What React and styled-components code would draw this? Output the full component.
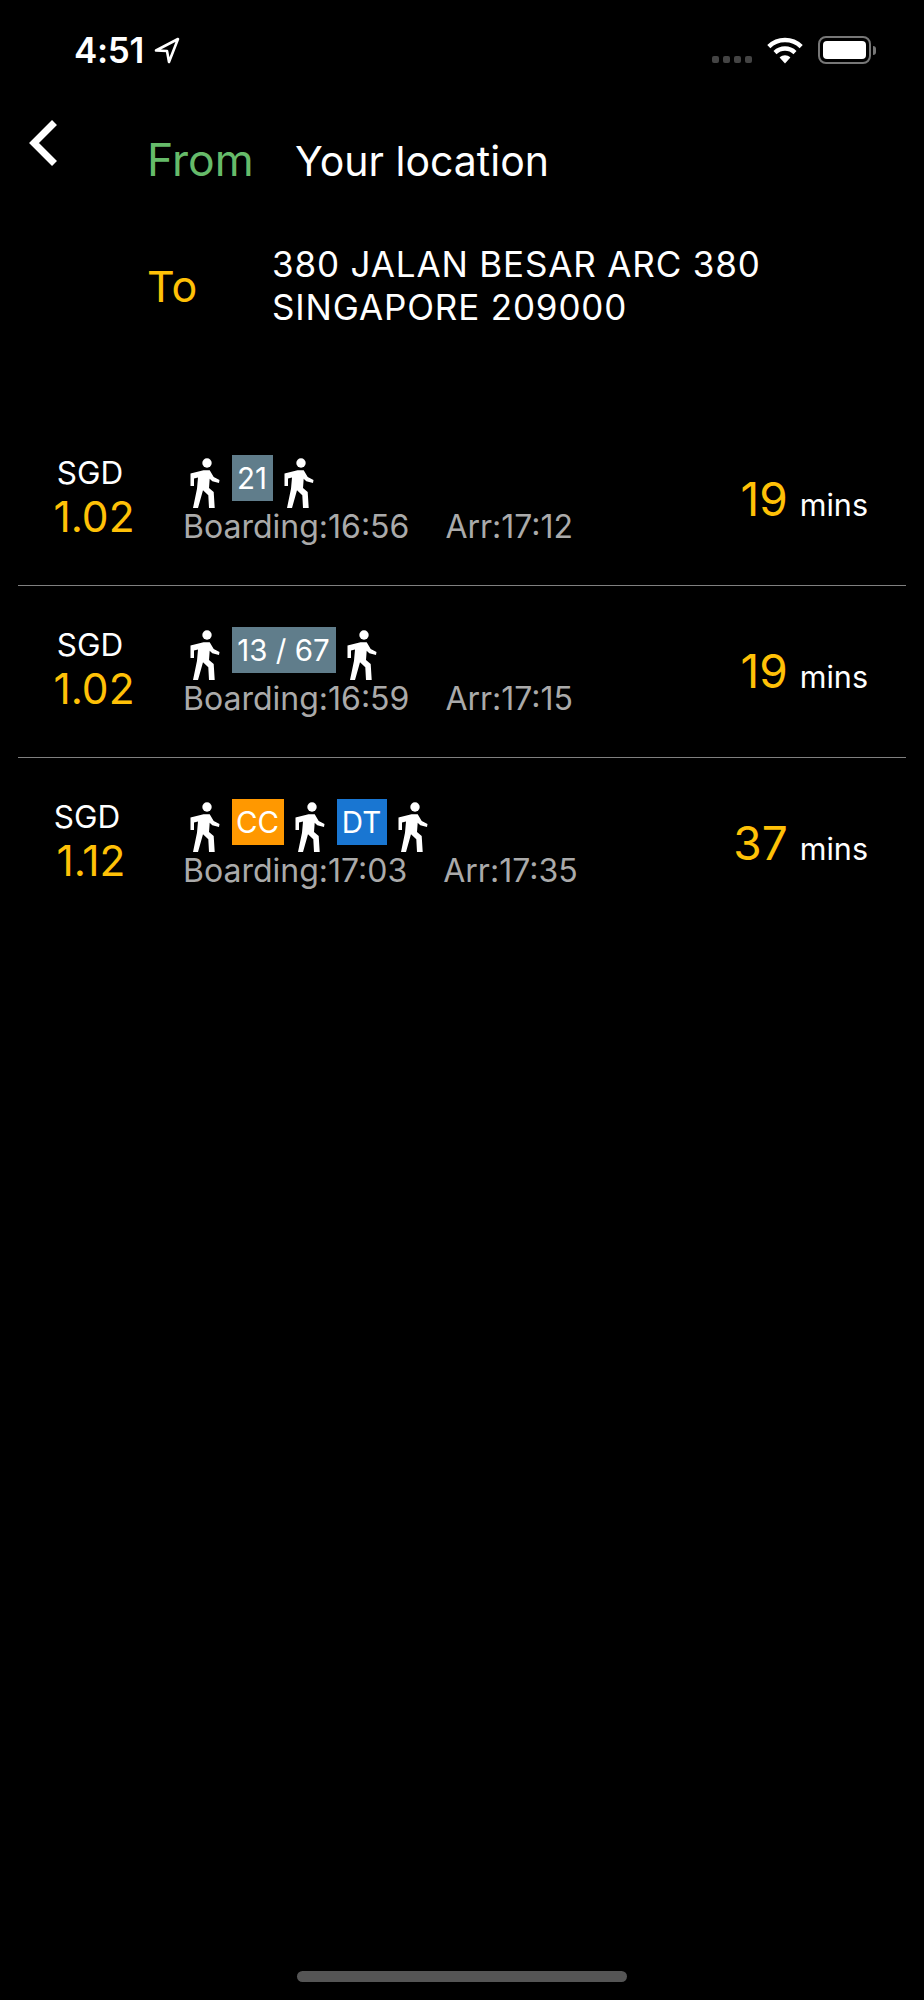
import React from "react";
import styled, { createGlobalStyle } from "styled-components";

const routes = [
  {
    price: "1.02",
    pad: 0,
    legs: [{ label: "21", color: "#607d8b", width: 41 }],
    boarding: "16:56",
    arrival: "17:12",
    mins: "19",
  },
  {
    price: "1.02",
    pad: 0,
    legs: [{ label: "13 / 67", color: "#607d8b", width: 104 }],
    boarding: "16:59",
    arrival: "17:15",
    mins: "19",
  },
  {
    price: "1.12",
    pad: 6,
    legs: [
      { label: "CC", color: "#ff9800", width: 52 },
      { label: "DT", color: "#1976d2", width: 50 },
    ],
    boarding: "17:03",
    arrival: "17:35",
    mins: "37",
  },
];

const Walker = () => (
  <WalkerIcon viewBox="0 0 44 60">
    <circle cx="24" cy="11" r="4.7" fill="#fff" />
    <path
      fill="#fff"
      d="M7.5 21.5 L20.5 18.3 L26.7 18.3 L30.7 25 L36.5 28 L36 31 L29.3 29.3 L26.7 26.7 L26 36 L30.7 40 L31.7 56 L26 56 L25.3 43.3 L20 38.3 L15 56 L10 56 L14 36.7 L15 25.5 L11 26.5 L11 34 L7.5 34 Z"
    />
  </WalkerIcon>
);

const StatusIcons = () => (
  <StatusRight>
    <Signal>
      <i />
      <i />
      <i />
      <i />
    </Signal>
    <svg width="36" height="27" viewBox="0 0 36 27">
      <g fill="none" stroke="#fff" strokeWidth="4.4">
        <path d="M1.8 9.6 C10.8 0.8 25.2 0.8 34.2 9.6" />
        <path d="M8 15.6 C13.8 10.2 22.2 10.2 28 15.6" />
      </g>
      <path fill="#fff" d="M12.6 20.4 C15.8 17.6 20.2 17.6 23.4 20.4 L18 26.6 Z" />
    </svg>
    <Battery>
      <BatteryFill />
    </Battery>
    <BatteryNub />
  </StatusRight>
);

const App = () => (
  <Page>
    <GlobalStyle />
    <StatusBar>
      <Clock>
        4:51
        <svg width="26" height="27" viewBox="0 0 26 27">
          <path
            fill="none"
            stroke="#fff"
            strokeWidth="2.6"
            strokeLinejoin="round"
            d="M2 13.5 L24 2 L15 25 L13 14 Z"
          />
        </svg>
      </Clock>
      <StatusIcons />
    </StatusBar>
    <Header>
      <BackButton>
        <svg width="28" height="46" viewBox="0 0 28 46">
          <path
            fill="none"
            stroke="#fff"
            strokeWidth="7"
            d="M25.5 2.5 L5 23 L25.5 43.5"
          />
        </svg>
      </BackButton>
      <Places>
        <FromRow>
          <PlaceLabel $color="#66bb6a">From</PlaceLabel>
          <FromValue>Your location</FromValue>
        </FromRow>
        <ToRow>
          <PlaceLabel $color="#ffc107">To</PlaceLabel>
          <Address>
            380 JALAN BESAR ARC 380
            <br />
            SINGAPORE 209000
          </Address>
        </ToRow>
      </Places>
    </Header>
    <RouteList>
      {routes.map((route, i) => (
        <Route key={i} $last={i === routes.length - 1}>
          <Fare $pad={route.pad}>
            <Currency>SGD</Currency>
            <Price>{route.price}</Price>
          </Fare>
          <Details>
            <Legs>
              <Walker />
              {route.legs.map((leg) => (
                <React.Fragment key={leg.label}>
                  <Badge $color={leg.color} $width={leg.width}>
                    {leg.label}
                  </Badge>
                  <Walker />
                </React.Fragment>
              ))}
            </Legs>
            <Times>
              <span>Boarding:{route.boarding}</span>
              <span>Arr:{route.arrival}</span>
            </Times>
          </Details>
          <Duration>
            <DurationValue>{route.mins}</DurationValue>
            <DurationUnit>mins</DurationUnit>
          </Duration>
        </Route>
      ))}
    </RouteList>
    <HomeBar />
  </Page>
);

const GlobalStyle = createGlobalStyle`
  html, body {
    margin: 0;
    background: #000;
  }
`;

const Page = styled.div`
  display: flex;
  flex-direction: column;
  min-height: 2000px;
  background: #000;
  color: #fff;
  font-family: Inter, "Liberation Sans", sans-serif;
`;

const StatusBar = styled.div`
  display: flex;
  justify-content: space-between;
  align-items: flex-start;
  height: 88px;
  padding: 0 48px 0 74px;
  box-sizing: border-box;
`;

const Clock = styled.div`
  display: flex;
  align-items: center;
  gap: 10px;
  height: 50px;
  margin-top: 25px;
  font-size: 35px;
  font-weight: 600;
  letter-spacing: -0.3px;
`;

const StatusRight = styled.div`
  display: flex;
  align-items: center;
  height: 28px;
  margin-top: 36px;

  & > svg {
    margin: 0 15px 0 15px;
  }
`;

const Signal = styled.div`
  display: flex;
  gap: 4px;
  margin-top: 19px;

  & i {
    width: 7px;
    height: 7px;
    border-radius: 2px;
    background: #444;
  }
`;

const Battery = styled.div`
  display: flex;
  width: 53px;
  height: 28px;
  padding: 3px;
  box-sizing: border-box;
  border: 2px solid #777;
  border-radius: 8px;
`;

const BatteryFill = styled.div`
  flex: 1;
  background: #fff;
  border-radius: 4px;
`;

const BatteryNub = styled.div`
  width: 3px;
  height: 9px;
  margin-left: 2px;
  background: #777;
  border-radius: 0 3px 3px 0;
`;

const Header = styled.div`
  display: flex;
  align-items: flex-start;
  padding-left: 29px;
  height: 326px;
`;

const BackButton = styled.div`
  display: flex;
  margin-top: 32px;
  width: 118px;
`;

const Places = styled.div`
  display: flex;
  flex-direction: column;
`;

const FromRow = styled.div`
  display: flex;
  align-items: baseline;
  margin-top: 48px;
`;

const ToRow = styled.div`
  display: flex;
  align-items: center;
  margin-top: 58px;
`;

const PlaceLabel = styled.div`
  font-size: 44.5px;
  line-height: 48px;
  color: ${(p) => p.$color};
  min-width: 148px;
  ${ToRow} & {
    min-width: 125px;
    font-size: 43px;
  }
`;

const FromValue = styled.div`
  font-size: 41px;
  line-height: 48px;
`;

const Address = styled.div`
  font-size: 35px;
  line-height: 43px;
  letter-spacing: 0.85px;
`;

const RouteList = styled.div`
  display: flex;
  flex-direction: column;
  margin: 0 18px;
`;

const Route = styled.div`
  display: flex;
  align-items: flex-start;
  height: 172px;
  box-sizing: border-box;
  padding-top: 41px;
  border-bottom: ${(p) => (p.$last ? "none" : "1.5px solid #808080")};
`;

const Fare = styled.div`
  display: flex;
  flex-direction: column;
  align-items: center;
  width: 165px;
  padding-right: ${(p) => 13 + p.$pad}px;
  box-sizing: border-box;
`;

const Currency = styled.div`
  font-size: 31.5px;
  line-height: 36px;
  margin-right: 8px;
`;

const Price = styled.div`
  font-size: 42.5px;
  line-height: 48px;
  margin-top: 2px;
  color: #ffc107;
`;

const Details = styled.div`
  display: flex;
  flex-direction: column;
  flex: 1;
`;

const Legs = styled.div`
  display: flex;
  align-items: flex-start;
  gap: 4.5px;
  height: 46px;
`;

const WalkerIcon = styled.svg`
  width: 44px;
  height: 60px;
  margin-top: -3px;
`;

const Badge = styled.div`
  display: flex;
  justify-content: center;
  align-items: center;
  width: ${(p) => p.$width}px;
  height: 46px;
  background: ${(p) => p.$color};
  font-size: 29.5px;
`;

const Times = styled.div`
  display: flex;
  gap: 36px;
  margin-top: 8px;
  font-size: 32px;
  line-height: 36px;
  color: #aaa;
`;

const Duration = styled.div`
  display: flex;
  align-items: baseline;
  gap: 12px;
  margin: 18px 38px 0 0;
`;

const DurationValue = styled.div`
  font-size: 46px;
  line-height: 52px;
  color: #ffc107;
`;

const DurationUnit = styled.div`
  font-size: 30.5px;
  line-height: 36px;
`;

const HomeBar = styled.div`
  width: 330px;
  height: 11px;
  margin: auto auto 18px;
  border-radius: 6px;
  background: #555;
`;

export default App;
